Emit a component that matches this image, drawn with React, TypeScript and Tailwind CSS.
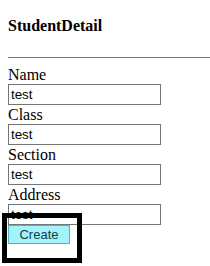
// ─── Student Detail Form ─────────────────────────────────
const fields = ['Name', 'Class', 'Section', 'Address']

export default function App() {
  return (
    <div className="relative h-[266px] w-[210px] overflow-hidden bg-white pl-2 font-['Liberation_Serif',serif] text-black">
      <h4 className="pt-[17px] text-base font-bold leading-[18px]">StudentDetail</h4>
      <hr className="mt-[22px] border-0 border-t border-[#7a7a7a]" />

      {/* Form fields */}
      <div className="mt-[7px] flex flex-col">
        {fields.map((f) => (
          <div key={f} className="flex flex-col">
            <label className="text-base leading-[19px]">{f}</label>
            <input
              readOnly
              value="test"
              className="h-[21px] w-[153px] border border-[#767676] bg-white px-[2px] font-['Liberation_Sans',Arial,sans-serif] text-[13.33px] text-black outline-none"
            />
          </div>
        ))}
        <button className="h-[19px] w-[62px] border border-[#4fb3c0] bg-[#a3f3fa] font-['Liberation_Sans',Arial,sans-serif] text-[13px] leading-[17px] text-[#163c44]">
          Create
        </button>
      </div>

      {/* Highlight box */}
      <div className="absolute left-[2px] top-[213px] h-[50px] w-[80px] border-[5px] border-black" />
    </div>
  )
}
